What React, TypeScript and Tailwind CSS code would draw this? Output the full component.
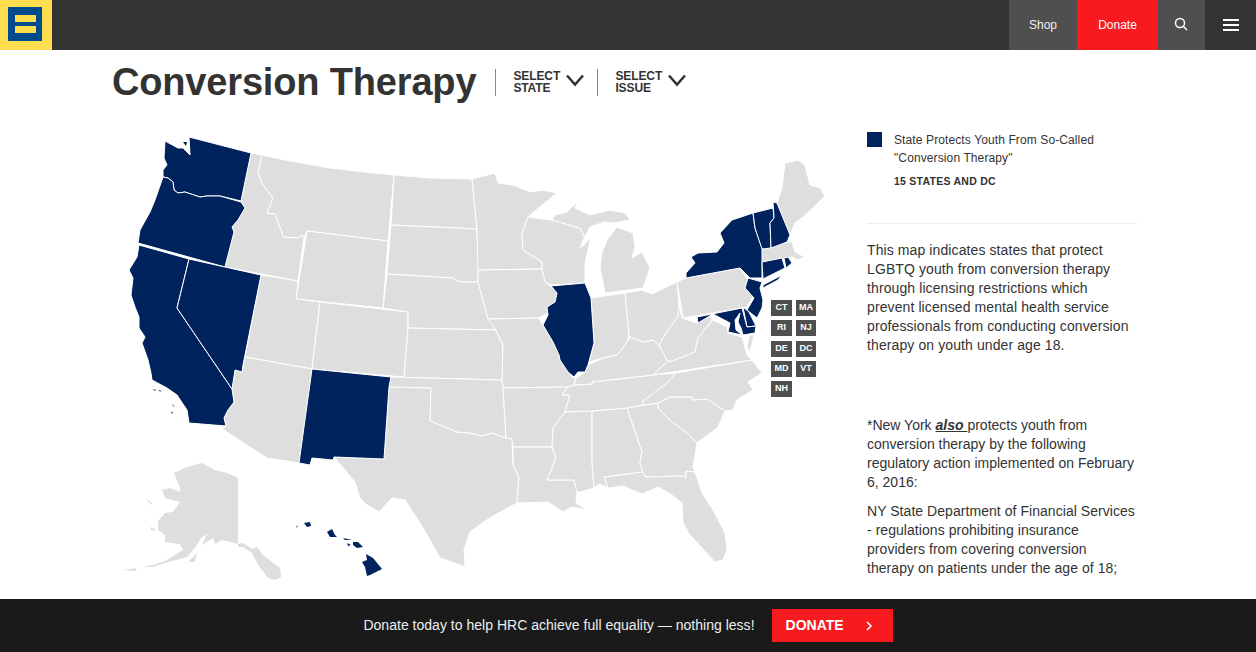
// App.tsx
import React from 'react';

interface StateShape {
  id: string;
  points: string;
}

// Coordinates are page pixels, the svg's viewBox starts at the map's corner
const grayStates: StateShape[] = [
  { id: 'ID', points: '251,153 262,155 258,172 262,183 273,198 267,213 275,214 279,225 282,232 283,237 298,238 302,235 304,238 298,281 225,267 234,232 232,227 238,220 245,208 241,201' },
  { id: 'MT', points: '262,155 290,161 330,168 365,172 394,175 388,241 307,231 304,238 302,235 298,238 283,237 282,232 279,225 275,214 267,213 273,198 262,183 258,172' },
  { id: 'WY', points: '307,231 388,241 383,308 296,299' },
  { id: 'UT', points: '261,275 298,281 296,299 320,302 312,369 245,357' },
  { id: 'CO', points: '320,302 408,312 408,328 404,377 312,369' },
  { id: 'AZ', points: '245,357 312,369 300,463 267,458 222,429 226,426 224,418 228,410 234,402 232,389 235,370 242,372' },
  { id: 'TX', points: '389,387 431,388 430,421 440,425 457,432 470,433 482,436 493,433 506,438 512,439 513,465 519,477 517,503 500,512 485,521 470,532 464,550 465,567 452,562 440,558 430,540 420,523 405,500 392,498 379,512 367,505 360,498 355,482 345,470 334,457 384,459' },
  { id: 'AK', points: '238,478 227,473 215,470 202,463 187,467 174,473 180,488 180,492 170,488 162,490 165,498 180,502 173,512 165,513 158,521 158,530 165,535 165,542 180,544 183,550 165,561 152,565 143,567 152,567 165,563 187,557 195,548 201,538 207,534 202,545 213,538 215,544 222,540 238,544 243,543 252,549 257,547 263,555 280,568 281,577 275,580 268,578 258,565 252,553 243,547 238,547' },
  { id: 'AK2', points: '150,527 155,529 155,531 151,530' },
  { id: 'AK3', points: '188,562 197,553 195,562' },
  { id: 'AK4', points: '146,498 152,503 151,505' },
  { id: 'AK5', points: '123,570 137,568 135,571' },
  { id: 'ND', points: '394,175 430,178 472,179 477,229 391,225' },
  { id: 'SD', points: '391,225 477,229 477,235 480,270 477,282 460,282 453,278 387,274' },
  { id: 'NE', points: '387,274 453,278 460,282 478,282 488,318 496,330 408,328 408,312 383,308' },
  { id: 'KS', points: '408,328 496,330 498,335 503,345 502,380 391,377 404,377' },
  { id: 'OK', points: '391,377 502,380 503,388 506,438 493,433 482,436 470,433 457,432 440,425 430,421 431,388 389,387' },
  { id: 'MN', points: '472,179 495,173 498,183 513,185 530,192 542,190 557,193 542,205 528,217 522,233 523,250 542,262 542,269 478,270 477,235 477,229' },
  { id: 'WI', points: '528,217 552,220 580,228 585,238 582,247 591,237 585,263 585,283 551,285 545,282 542,269 542,262 523,250 522,233' },
  { id: 'IA', points: '478,270 542,269 545,282 551,286 557,293 555,302 547,307 548,313 539,318 488,319 478,282' },
  { id: 'MO', points: '488,319 539,318 543,325 553,342 559,355 560,360 568,372 572,377 576,378 574,385 568,387 503,388 502,380 503,345 498,335 496,330' },
  { id: 'AR', points: '503,388 568,387 562,395 570,395 565,412 553,428 552,447 513,447 512,439 506,438' },
  { id: 'LA', points: '513,447 552,447 556,458 547,480 574,480 577,492 576,503 587,510 572,507 563,512 548,502 517,503 519,477 513,465' },
  { id: 'MS', points: '565,412 592,411 592,462 594,488 580,492 577,492 574,480 547,480 556,458 552,447 553,428' },
  { id: 'AL', points: '592,411 627,408 642,452 640,463 643,472 604,477 608,488 600,484 594,488 592,462' },
  { id: 'GA', points: '627,408 658,403 658,408 670,420 687,433 697,443 693,467 695,472 686,471 686,478 683,476 645,477 643,472 640,463 642,452' },
  { id: 'FL', points: '604,477 643,472 645,477 683,476 686,478 686,471 695,472 702,493 713,510 725,533 727,550 723,560 715,562 702,548 690,535 683,523 682,503 672,495 658,487 642,494 623,486 608,488' },
  { id: 'SC', points: '658,403 670,397 692,397 693,400 707,399 725,411 718,427 697,443 687,433 670,420 658,408' },
  { id: 'NC', points: '676,373 752,360 762,373 748,382 753,390 737,400 733,410 725,411 707,399 693,400 692,397 670,397 658,403 643,405 643,401 667,383' },
  { id: 'TN', points: '574,385 592,384 592,382 653,375 676,373 667,383 643,401 643,405 627,408 592,411 565,412 570,395 562,395 568,387' },
  { id: 'KY', points: '588,365 603,358 617,355 627,342 630,337 643,342 653,340 659,345 667,360 669,360 653,375 592,382 592,384 574,385 576,378 585,372' },
  { id: 'IN', points: '591,298 625,293 629,335 627,342 617,355 603,358 589,362 594,343' },
  { id: 'OH', points: '625,293 642,290 652,294 677,282 679,305 678,317 670,327 665,335 659,345 653,340 643,342 630,337 629,335' },
  { id: 'MI', points: '607,240 617,227 633,233 635,247 632,258 642,252 650,268 643,288 605,293 600,268 602,252' },
  { id: 'UP', points: '552,220 555,215 567,212 578,201 575,208 590,215 610,210 625,213 630,220 613,223 604,222 590,227 583,240 580,248 585,238 580,228' },
  { id: 'WV', points: '679,305 682,318 697,323 710,315 712,320 703,332 698,338 695,352 680,358 670,362 667,360 659,345 665,335 670,327 678,317' },
  { id: 'VA', points: '713,320 727,327 728,333 742,337 747,355 752,360 653,375 669,360 670,362 680,358 695,352 698,338 703,332' },
  { id: 'ES', points: '749,335 754,335 750,352 747,347' },
  { id: 'PA', points: '677,282 686,278 740,268 748,280 745,288 753,297 747,307 683,318' },
  { id: 'ME', points: '777,203 782,188 785,163 798,160 805,165 810,185 820,188 825,196 813,208 803,217 795,223 790,235' },
  { id: 'MA', points: '762,249 787,242 792,242 795,252 805,257 798,260 792,257 761,262' },
];

const navyStates: StateShape[] = [
  { id: 'WA', points: '189,137 251,153 241,201 220,196 207,196 200,197 185,192 178,193 174,190 173,182 168,178 163,177 163,170 167,165 164,158 165,141 178,148 183,148 190,155' },
  { id: 'OR', points: '163,177 168,178 173,182 174,190 178,193 185,192 200,197 207,196 220,196 241,202 245,208 238,220 232,227 234,232 225,267 138,243 140,230 150,212 155,200' },
  { id: 'CA', points: '139,245 189,259 177,308 232,389 234,402 228,410 224,418 226,426 189,423 187,410 177,395 167,388 152,380 151,373 148,360 142,343 145,337 139,328 139,317 135,307 131,295 133,278 129,270 137,257' },
  { id: 'NV', points: '189,259 261,275 243,365 242,372 235,370 232,389 177,308' },
  { id: 'NM', points: '312,369 391,377 389,387 384,459 334,457 333,460 312,458 310,465 299,463' },
  { id: 'IL', points: '551,286 585,283 591,298 594,343 588,365 585,372 578,372 574,377 568,372 560,360 559,355 553,342 543,325 548,315 547,307 555,302 557,293' },
  { id: 'NY', points: '686,278 686,273 695,263 691,257 698,253 717,252 724,243 720,233 732,220 753,213 755,228 762,248 762,278 750,278 740,268' },
  { id: 'LI', points: '763,285 782,275 778,280 763,288' },
  { id: 'VT', points: '753,213 773,208 774,218 770,223 771,248 762,249 755,228' },
  { id: 'NH', points: '773,202 777,203 790,235 787,242 771,248 770,223 774,218' },
  { id: 'CT', points: '762,262 782,258 785,268 763,279' },
  { id: 'RI', points: '784,258 788,257 792,263 786,268' },
  { id: 'NJ', points: '748,278 762,282 760,288 763,300 762,308 757,318 747,310 754,298 745,288' },
  { id: 'DE', points: '743,307 749,312 756,326 747,327' },
  { id: 'MD', points: '697,317 742,308 747,327 756,326 755,333 743,335 741,328 738,322 740,313 735,320 736,330 742,335 728,332 730,323 713,314 698,323' },
  // Hawaii
  { id: 'HI', points: '366,554 373,558 382,569 370,575 367,576 365,567 362,562 367,560' },
  { id: 'HI2', points: '353,542 358,542 363,547 357,548 353,545' },
  { id: 'HI3', points: '332,529 335,535 337,537 330,537 327,532' },
  { id: 'HI4', points: '304,523 310,522 311,526 307,527' },
  { id: 'HI5', points: '343,538 352,540 345,540' },
  { id: 'HI6', points: '347,543 351,545 348,546' },
  { id: 'HI7', points: '296,527 298,525 297,527.5' },
  // Channel islands and Puget Sound
  { id: 'CI', points: '153,389 156,390 155,391' },
  { id: 'CI2', points: '158,390 162,391 160,391.5' },
  { id: 'CI3', points: '172,404 175,407 173,406' },
  { id: 'CI4', points: '171,411 173,413 172,414' },
  { id: 'PS', points: '183,142 187,142 186,146' },
];

const statePills = [['CT', 'MA'], ['RI', 'NJ'], ['DE', 'DC'], ['MD', 'VT'], ['NH']];

const Chevron = () => (
  <svg width="18" height="13" viewBox="0 0 18 13" fill="none" stroke="#333333" strokeWidth="2.5" className="ml-[5px] mt-[-4px]">
    <path d="M1 1.5 L9 10.5 L17 1.5" />
  </svg>
);

const SelectLabel = ({ top, bottom }: { top: string; bottom: string }) => (
  <div className="flex items-center border-l border-[#8a8a8a] pl-[17px] h-[27px]">
    <div className="text-[12px] leading-[12px] font-bold text-[#333333] w-[48px] tracking-[-0.1px]">
      {top}
      <br />
      {bottom}
    </div>
    <Chevron />
  </div>
);

export default function App() {
  return (
    <div className="h-screen flex flex-col overflow-hidden bg-white font-['Liberation_Sans',Arial,sans-serif] text-[#333333]">
      {/* Top nav */}
      <header className="h-[50px] shrink-0 flex bg-[#333333] text-white text-[12px]">
        <div className="w-[52px] bg-[#ffdd4f] pl-[8px] pt-[7px]">
          <svg width="34" height="34" viewBox="0 0 34 34" className="block">
            <rect width="34" height="34" fill="#004b8d" />
            <rect x="7" y="8" width="21" height="7" fill="#ffdd4f" />
            <rect x="7" y="19" width="21" height="7" fill="#ffdd4f" />
          </svg>
        </div>
        <div className="flex-1" />
        <a className="w-[68px] bg-[#4f4f4f] flex items-center justify-center text-[#eeeeee]">Shop</a>
        <a className="w-[81px] bg-[#f71b1f] flex items-center justify-center">Donate</a>
        <a className="w-[47px] bg-[#4f4f4f] flex items-center justify-center pr-[2px]">
          <svg width="14" height="14" viewBox="0 0 14 14" fill="none" stroke="#ffffff" strokeWidth="1.5" className="mt-[-2px]">
            <circle cx="6" cy="6" r="4.5" />
            <path d="M9.5 9.5 L13 13" />
          </svg>
        </a>
        <a className="w-[51px] flex flex-col items-center justify-center gap-[3px]">
          <span className="block w-[16px] h-[2px] bg-white" />
          <span className="block w-[16px] h-[2px] bg-white" />
          <span className="block w-[16px] h-[2px] bg-white" />
        </a>
      </header>

      <main className="flex-1 min-h-0 overflow-hidden">
        {/* Title row */}
        <div className="flex items-center pl-[112px] h-[64px]">
          <h1 className="text-[38px] leading-[44px] font-bold mr-[19px] tracking-[-0.17px]">Conversion Therapy</h1>
          <SelectLabel top="SELECT" bottom="STATE" />
          <div className="w-[13px]" />
          <SelectLabel top="SELECT" bottom="ISSUE" />
        </div>

        <div className="flex pl-[110px] pt-[11px]">
          {/* Map */}
          <div className="relative w-[720px] h-[475px] shrink-0">
            <svg width="720" height="475" viewBox="110 125 720 475" className="block">
              <g fill="#dedede" stroke="#ffffff" strokeWidth="1" strokeLinejoin="round">
                {grayStates.map((s) => (
                  <polygon key={s.id} points={s.points} strokeWidth={s.id.startsWith('AK') ? 0 : 1} />
                ))}
              </g>
              <g fill="#00235d" stroke="#ffffff" strokeWidth="1" strokeLinejoin="round">
                {navyStates.map((s) => (
                  <polygon key={s.id} points={s.points} strokeWidth={s.id.startsWith('HI') || s.id.startsWith('CI') || s.id === 'PS' ? 0 : 1} />
                ))}
              </g>
            </svg>
            <div className="absolute left-[661px] top-[175px] flex flex-col gap-1">
              {statePills.map((row, i) => (
                <div key={row[0]} className={`flex gap-1 ${i === 2 ? 'mt-px' : ''}`}>
                  {row.map((s, j) => (
                    <span
                      key={s}
                      className={`bg-[#4f4f4f] text-white text-[9px] font-bold flex items-center justify-center h-4 ${j === 0 ? 'w-[21px]' : 'w-[20px]'}`}
                    >
                      {s}
                    </span>
                  ))}
                </div>
              ))}
            </div>
          </div>

          {/* Side column */}
          <aside className="ml-[37px] w-[270px] shrink-0">
            <div className="flex pt-[6px] h-[83px] border-b border-[#eeeeee] box-content pb-[9px]">
              <span className="block w-[15px] h-[15px] bg-[#00235d] shrink-0 mt-[1px]" />
              <div className="ml-[12px] text-[12px] leading-[18px] tracking-[0.11px]">
                <p>
                  State Protects Youth From So-Called
                  <br />
                  "Conversion Therapy"
                </p>
                <p className="text-[10.5px] leading-[14px] font-bold mt-[7px] tracking-[0.25px]">15 STATES AND DC</p>
              </div>
            </div>
            <div className="text-[14px] leading-[19px] pt-[17px]">
              <p className="tracking-[0.1px]">
                This map indicates states that protect LGBTQ youth from conversion therapy through licensing restrictions which prevent licensed mental health service professionals from conducting conversion therapy on youth under age 18.
              </p>
              <p className="mt-[61px]">
                *New York <strong className="italic underline">also </strong>protects youth from conversion therapy by the following regulatory action implemented on February 6, 2016:
              </p>
              <p className="mt-[10px] tracking-[0.05px]">
                NY State Department of Financial Services - regulations prohibiting insurance providers from covering conversion therapy on patients under the age of 18;
              </p>
            </div>
          </aside>
        </div>
      </main>

      {/* Donate bar */}
      <footer className="h-[53px] shrink-0 bg-[#1a1a1a] flex items-center justify-center text-white">
        <span className="text-[14px] text-[#eeeeee] tracking-[0.02px]">Donate today to help HRC achieve full equality — nothing less!</span>
        <a className="ml-[17px] w-[121px] h-[33px] bg-[#f71b1f] flex items-center pl-[14px] text-[14px] font-bold">
          DONATE
          <svg width="8" height="10" viewBox="0 0 8 10" fill="none" stroke="#ffffff" strokeWidth="1.6" className="ml-[21px]">
            <path d="M2 1 L6 5 L2 9" />
          </svg>
        </a>
      </footer>
    </div>
  );
}
